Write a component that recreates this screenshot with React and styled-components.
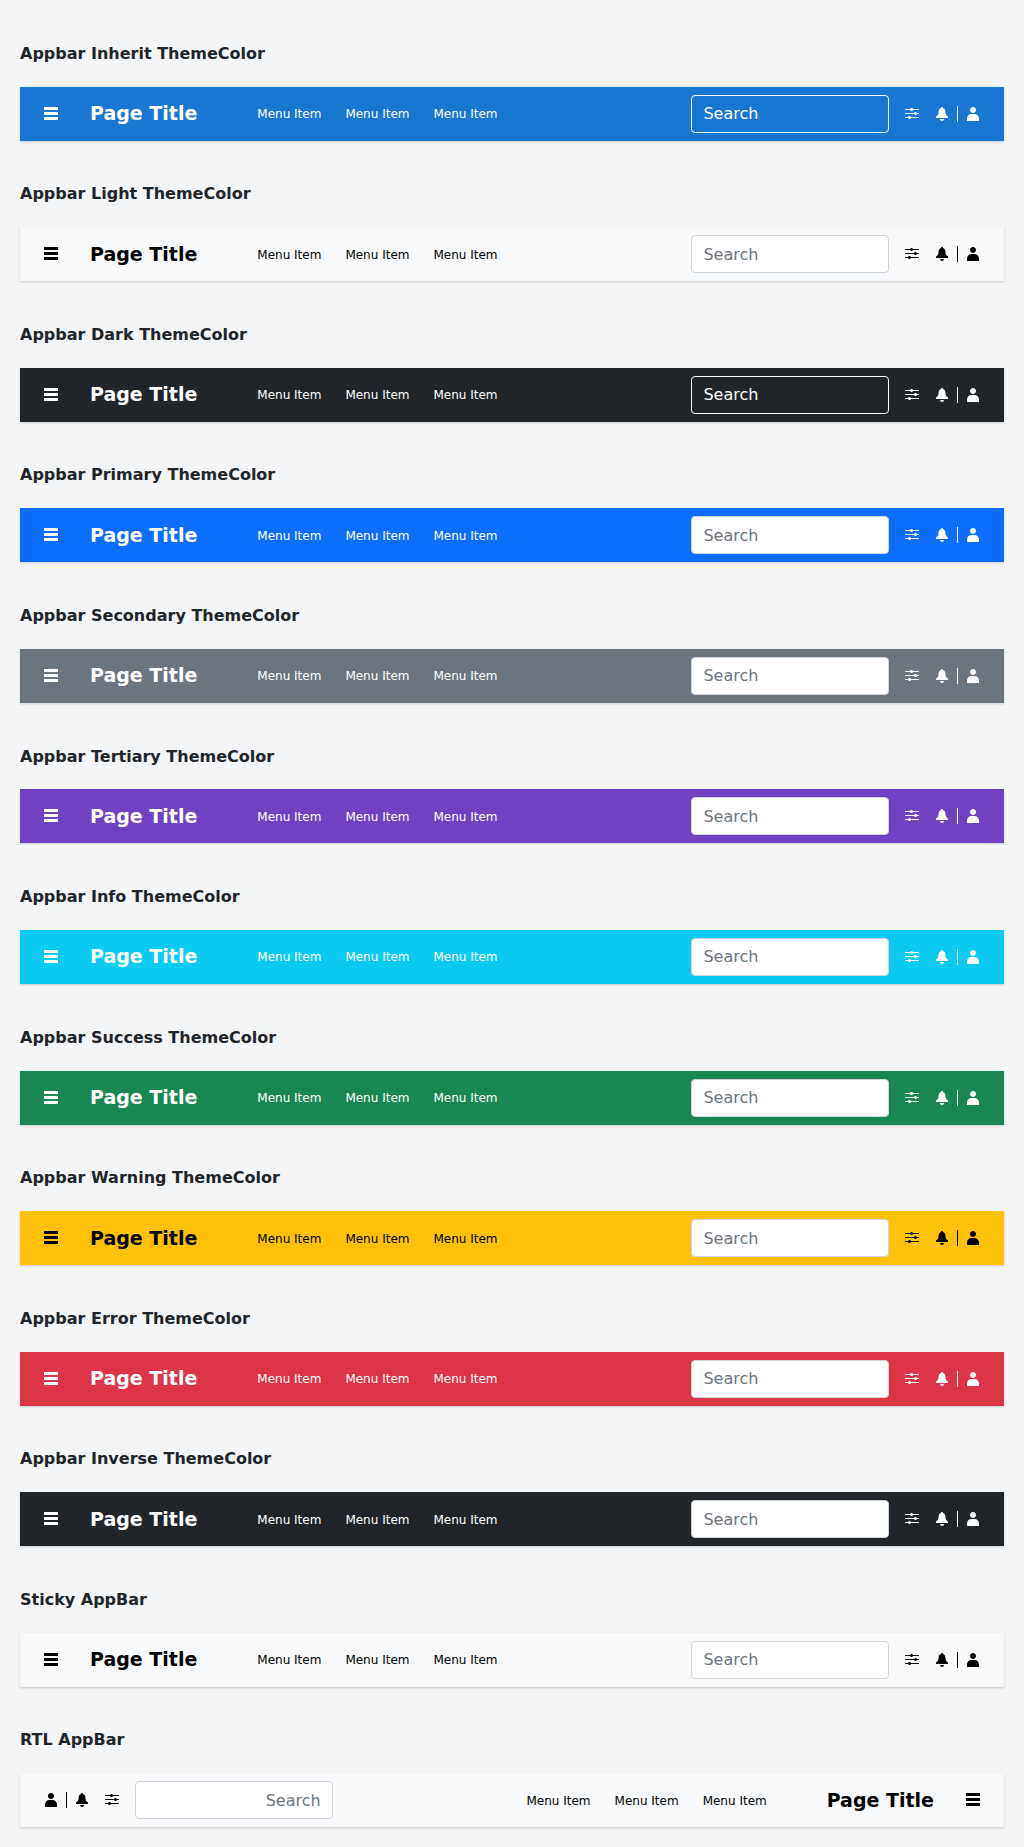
import React from "react";
import styled, { createGlobalStyle, css } from "styled-components";

const GlobalStyle = createGlobalStyle`
  *, *::before, *::after { box-sizing: border-box; }
  body {
    margin: 0;
    background: #f4f5f7;
    color: #212529;
    font-family: "DejaVu Sans", sans-serif;
    font-size: 16px;
    line-height: 1.5;
  }
`;

const Page = styled.main`
  height: 1847px;
  padding: 20px 20px 0;
  overflow: hidden;
`;

const Section = styled.section`
  display: flow-root;
  padding-bottom: 19.97px;
`;

const Heading = styled.h4`
  margin: 21.72px 0 20.88px;
  font-size: 16px;
  line-height: 24px;
  font-weight: 700;
`;

const Bar = styled.header`
  display: flex;
  align-items: center;
  height: 54px;
  padding: 8px 23px;
  background: ${(p) => p.$bg};
  color: ${(p) => p.$fg};
  box-shadow: 0 1px 2px rgba(0, 0, 0, 0.18);
`;

const IconButton = styled.button`
  display: flex;
  padding: 0;
  border: 0;
  background: none;
  color: inherit;
`;

const Title = styled.h1`
  margin: 0;
  margin-inline-start: 31px;
  padding-bottom: 1px;
  font-size: 19px;
  line-height: 28px;
  font-weight: 700;
  white-space: nowrap;
`;

const Menu = styled.ul`
  display: flex;
  gap: 24px;
  margin: 0;
  margin-inline-start: 60px;
  padding: 1px 0 0;
  list-style: none;
  font-size: 12px;
  line-height: 18px;
  white-space: nowrap;
`;

const Spacer = styled.div`
  flex: 1;
`;

const SearchInput = styled.input`
  width: 198px;
  height: 38px;
  margin-inline-end: 15px;
  padding: 6px 11.4px;
  border: 1px solid #ced4da;
  border-radius: 4px;
  background: #fff;
  color: inherit;
  font: inherit;
  outline: none;
  &::placeholder { color: #6c757d; opacity: 1; }
  ${(p) => p.$outlined && css`
    border-color: #fff;
    background: transparent;
    &::placeholder { color: #fff; }
  `}
`;

const Actions = styled.div`
  display: flex;
  align-items: center;
`;

const BellButton = styled(IconButton)`
  margin-inline-start: 14px;
`;

const Separator = styled.span`
  width: 1px;
  height: 16px;
  margin: 0 7px;
  background: currentColor;
`;

const Svg = styled.svg`
  display: block;
  width: 16px;
  height: 16px;
  fill: currentColor;
`;

const paths = {
  menu: "M32 32h448v96H32zM32 192h448v96H32zM32 352h448v96H32z",
  sliders:
    "M480 128H285c-6 19-24 32-45 32s-38-13-45-32H32V96h163c7-19 24-32 45-32s39 13 45 32h195zM32 224h291c7-19 24-32 45-32s39 13 45 32h67v32h-67c-6 19-24 32-45 32s-38-13-45-32H32zM32 352h99c7-19 24-32 45-32s39 13 45 32h259v32H221c-6 19-24 32-45 32s-38-13-45-32H32z",
  bell: "M192 416h128c0 36-28 64-64 64s-64-28-64-64zM448 336v48H64v-48c48-24 80-64 80-128 0-76 32-128 80-144 0-18 14-32 32-32s32 14 32 32c48 16 80 68 80 144 0 64 32 104 80 128z",
  user: "M352 128c0 53-43 96-96 96s-96-43-96-96 43-96 96-96 96 43 96 96zM304 256h-96C129 256 64 321 64 400v80h384v-80c0-79-65-144-144-144z",
};

const Icon = ({ name }) => (
  <Svg viewBox="0 0 512 512" aria-hidden="true">
    <path d={paths[name]} />
  </Svg>
);

const MENU_ITEMS = ["Menu Item", "Menu Item", "Menu Item"];

const AppBar = ({ bg, fg = "#fff", outlined, dir = "ltr" }) => (
  <Bar $bg={bg} $fg={fg} dir={dir}>
    <IconButton aria-label="Menu"><Icon name="menu" /></IconButton>
    <Title>Page Title</Title>
    <Menu>
      {MENU_ITEMS.map((label, i) => (
        <li key={i}>{label}</li>
      ))}
    </Menu>
    <Spacer />
    <SearchInput placeholder="Search" $outlined={outlined} />
    <Actions>
      <IconButton aria-label="Settings"><Icon name="sliders" /></IconButton>
      <BellButton aria-label="Notifications"><Icon name="bell" /></BellButton>
      <Separator />
      <IconButton aria-label="Account"><Icon name="user" /></IconButton>
    </Actions>
  </Bar>
);

const EXAMPLES = [
  { title: "Appbar Inherit ThemeColor", bg: "#1976d2", outlined: true },
  { title: "Appbar Light ThemeColor", bg: "#f8f9fa", fg: "#000" },
  { title: "Appbar Dark ThemeColor", bg: "#212529", outlined: true },
  { title: "Appbar Primary ThemeColor", bg: "#0d6efd" },
  { title: "Appbar Secondary ThemeColor", bg: "#6c757d" },
  { title: "Appbar Tertiary ThemeColor", bg: "#6f42c1" },
  { title: "Appbar Info ThemeColor", bg: "#0dcaf0" },
  { title: "Appbar Success ThemeColor", bg: "#198754" },
  { title: "Appbar Warning ThemeColor", bg: "#ffc107", fg: "#000" },
  { title: "Appbar Error ThemeColor", bg: "#dc3545" },
  { title: "Appbar Inverse ThemeColor", bg: "#212529" },
  { title: "Sticky AppBar", bg: "#f8f9fa", fg: "#000" },
  { title: "RTL AppBar", bg: "#f8f9fa", fg: "#000", dir: "rtl" },
];

export default function App() {
  return (
    <>
      <GlobalStyle />
      <Page>
        {EXAMPLES.map(({ title, ...bar }) => (
          <Section key={title}>
            <Heading>{title}</Heading>
            <AppBar {...bar} />
          </Section>
        ))}
      </Page>
    </>
  );
}
